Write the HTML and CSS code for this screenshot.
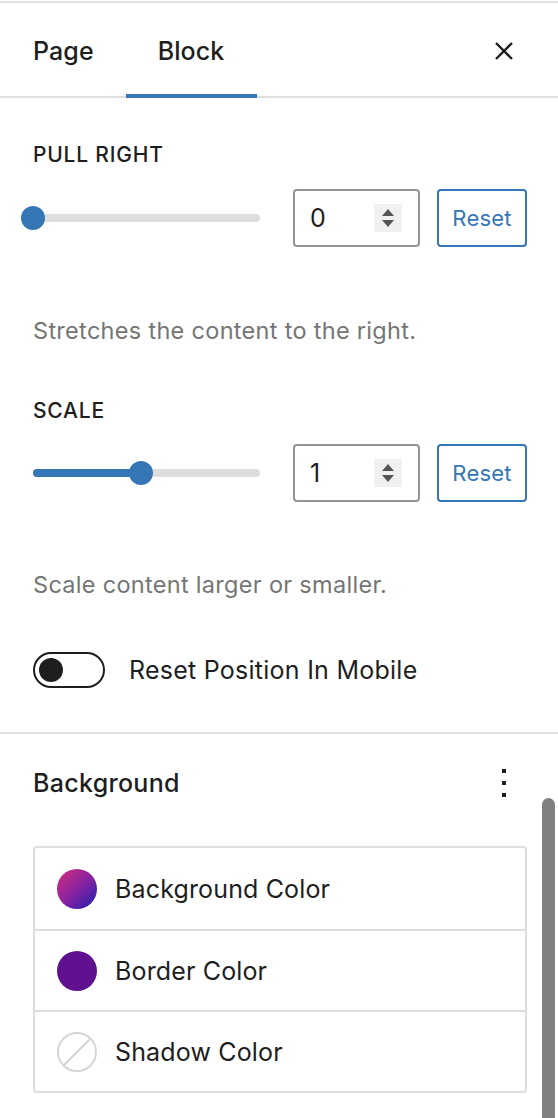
FILE: index.html
```html
<!DOCTYPE html>
<html>
<head>
<meta charset="utf-8">
<link rel="stylesheet" href="styles.css">
</head>
<body>
<div class="sidebar">
  <div class="topline"></div>
  <div class="tabs">
    <div class="tab">Page</div>
    <div class="tab active">Block</div>
    <button class="close" aria-label="Close">
      <svg width="24" height="24" viewBox="0 0 24 24"><path d="M4 4 L20 20 M20 4 L4 20" stroke="#1e1e1e" stroke-width="2.4" fill="none"/></svg>
    </button>
  </div>

  <section class="panel">
    <div class="control">
      <div class="label">Pull Right</div>
      <div class="row">
        <div class="slider">
          <div class="track"><div class="fill" style="width:0%"></div></div>
          <div class="thumb" style="left:0%"></div>
        </div>
        <div class="number">
          <span class="value">0</span>
          <span class="spin"><i class="up"></i><i class="down"></i></span>
        </div>
        <button class="reset">Reset</button>
      </div>
      <p class="help">Stretches the content to the right.</p>
    </div>

    <div class="control second">
      <div class="label">Scale</div>
      <div class="row">
        <div class="slider">
          <div class="track"><div class="fill" style="width:47.5%"></div></div>
          <div class="thumb" style="left:47.5%"></div>
        </div>
        <div class="number">
          <span class="value">1</span>
          <span class="spin"><i class="up"></i><i class="down"></i></span>
        </div>
        <button class="reset">Reset</button>
      </div>
      <p class="help">Scale content larger or smaller.</p>
    </div>

    <div class="toggle-row">
      <span class="toggle"><span class="knob"></span></span>
      <span class="toggle-label">Reset Position In Mobile</span>
    </div>
  </section>

  <section class="bg">
    <div class="bg-head">
      <h2>Background</h2>
      <button class="kebab" aria-label="Options"><i></i><i></i><i></i></button>
    </div>
    <div class="colors">
      <div class="color-row"><span class="swatch grad"></span><span>Background Color</span></div>
      <div class="color-row"><span class="swatch purple"></span><span>Border Color</span></div>
      <div class="color-row"><span class="swatch none"></span><span>Shadow Color</span></div>
    </div>
  </section>

  <div class="scrollbar"></div>
</div>
</body>
</html>
```

FILE: styles.css
```css
* { box-sizing: border-box; }
html, body { margin: 0; padding: 0; background: #fff; }
body {
  font-family: Inter, "Noto Sans", "Liberation Sans", sans-serif;
  color: #1e1e1e;
  width: 558px;
  height: 1118px;
  overflow: hidden;
}
.sidebar { position: relative; width: 558px; height: 1118px; }
.topline { height: 4px; border-top: 2px solid #e0e0e0; margin-top: 1px; }

.tabs {
  display: flex;
  align-items: stretch;
  height: 93px;
  border-bottom: 2px solid #e0e0e0;
}
.tab {
  display: flex;
  align-items: center;
  padding: 0 32px 0 33px;
  font-size: 25px;
  font-weight: 500;
  letter-spacing: 0.1px;
  color: #1e1e1e;
  position: relative;
}
.tab.active { padding-left: 32px; padding-right: 33px; }
.tab.active::after {
  content: "";
  position: absolute;
  left: 0; right: 0; bottom: -2px;
  height: 4px;
  background: #3577b6;
}
.close {
  margin-left: auto;
  margin-right: 42px;
  align-self: center;
  background: none;
  border: 0;
  padding: 0;
  width: 24px;
  height: 24px;
  margin-top: 1px;
}

.panel {
  padding: 44px 31px 44px 33px;
  border-bottom: 2px solid #e0e0e0;
}
.control.second { margin-top: 52px; }
.label {
  font-size: 21px;
  line-height: 26px;
  font-weight: 500;
  text-transform: uppercase;
  letter-spacing: 0.8px;
}
.row {
  display: flex;
  align-items: center;
  margin-top: 21px;
  height: 58px;
}
.control.second .row { margin-top: 20px; }
.slider {
  position: relative;
  flex: 1;
  margin-right: 33px;
  height: 24px;
  display: flex;
  align-items: center;
}
.track {
  width: 100%;
  height: 8px;
  border-radius: 4px;
  background: #ddd;
  overflow: hidden;
}
.fill { height: 100%; background: #3577b6; }
.thumb {
  position: absolute;
  top: 0;
  width: 24px;
  height: 24px;
  margin-left: -12px;
  border-radius: 50%;
  background: #3577b6;
}
.number {
  width: 127px;
  height: 58px;
  border: 2px solid #949494;
  border-radius: 4px;
  display: flex;
  align-items: center;
  padding: 0 16px 0 15px;
}
.value { font-size: 25px; flex: 1; }
.spin {
  width: 28px;
  height: 28px;
  background: #f0f0f0;
  display: flex;
  flex-direction: column;
  align-items: center;
  justify-content: center;
  gap: 4px;
}
.spin i { width: 0; height: 0; border-left: 6px solid transparent; border-right: 6px solid transparent; }
.spin .up { border-bottom: 7px solid #555; }
.spin .down { border-top: 7px solid #555; }
.reset {
  margin-left: 17px;
  width: 90px;
  height: 58px;
  border: 2px solid #3577b6;
  border-radius: 4px;
  background: #fff;
  color: #3577b6;
  font-family: inherit;
  font-size: 22px;
  letter-spacing: 0.2px;
  padding: 0;
}
.help {
  margin: 69px 0 0;
  font-size: 23.5px;
  letter-spacing: 0.3px;
  line-height: 30px;
  color: #757575;
}
.control.second .help { margin-top: 68px; }

.toggle-row {
  display: flex;
  align-items: center;
  margin-top: 52px;
  height: 36px;
}
.toggle {
  width: 72px;
  height: 36px;
  border: 2px solid #1e1e1e;
  border-radius: 18px;
  display: flex;
  align-items: center;
  padding: 0 4px;
}
.knob { width: 24px; height: 24px; border-radius: 50%; background: #1e1e1e; }
.toggle-label { margin-left: 24px; font-size: 25px; letter-spacing: 0.25px; }

.bg { padding: 34px 31px 0 33px; }
.bg-head { display: flex; align-items: center; height: 30px; }
.bg-head h2 { margin: 0; font-size: 25px; font-weight: 500; line-height: 30px; letter-spacing: 0.3px; }
.kebab {
  margin-left: auto;
  margin-right: 19px;
  background: none;
  border: 0;
  padding: 0;
  display: flex;
  flex-direction: column;
  gap: 8px;
  align-items: center;
  width: 8px;
}
.kebab i { width: 4px; height: 4px; background: #1e1e1e; }

.colors {
  margin-top: 48px;
  border: 2px solid #ddd;
  border-radius: 4px;
}
.color-row {
  height: 81px;
  display: flex;
  align-items: center;
  padding-left: 22px;
  font-size: 25px;
  letter-spacing: 0.15px;
}
.color-row + .color-row { border-top: 2px solid #ddd; }
.swatch {
  width: 40px;
  height: 40px;
  border-radius: 50%;
  margin-right: 18px;
  flex: none;
}
.swatch.grad { background: linear-gradient(135deg, #d42d78 0%, #8a23a0 50%, #1d1db0 100%); }
.swatch.purple { background: #5f1190; }
.swatch.none {
  border: 2px solid #d6d6d6;
  background: linear-gradient(135deg, transparent calc(50% - 1px), #d6d6d6 calc(50% - 1px), #d6d6d6 calc(50% + 1px), transparent calc(50% + 1px));
}

.scrollbar {
  position: absolute;
  left: 542px;
  top: 797px;
  width: 13px;
  height: 340px;
  border-radius: 7px;
  background: #808080;
}
```
